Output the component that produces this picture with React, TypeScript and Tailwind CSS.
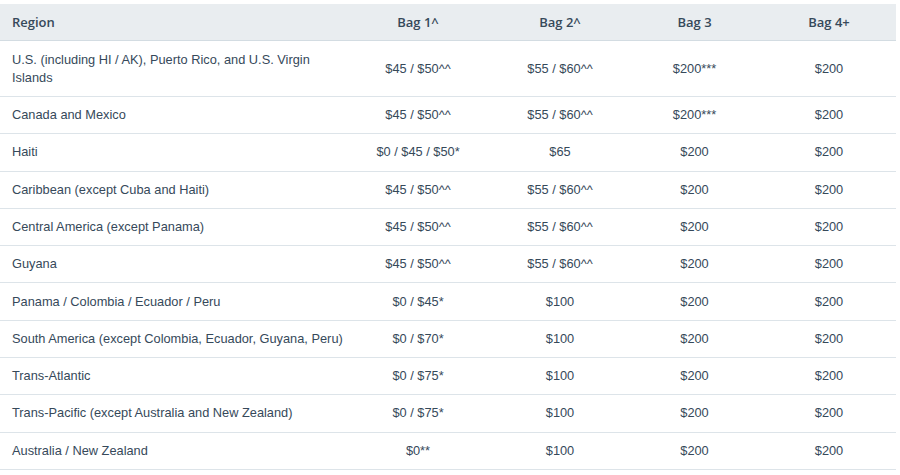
const rows: [string, string, string, string, string][] = [
  ["U.S. (including HI / AK), Puerto Rico, and U.S. Virgin Islands", "$45 / $50^^", "$55 / $60^^", "$200***", "$200"],
  ["Canada and Mexico", "$45 / $50^^", "$55 / $60^^", "$200***", "$200"],
  ["Haiti", "$0 / $45 / $50*", "$65", "$200", "$200"],
  ["Caribbean (except Cuba and Haiti)", "$45 / $50^^", "$55 / $60^^", "$200", "$200"],
  ["Central America (except Panama)", "$45 / $50^^", "$55 / $60^^", "$200", "$200"],
  ["Guyana", "$45 / $50^^", "$55 / $60^^", "$200", "$200"],
  ["Panama / Colombia / Ecuador / Peru", "$0 / $45*", "$100", "$200", "$200"],
  ["South America (except Colombia, Ecuador, Guyana, Peru)", "$0 / $70*", "$100", "$200", "$200"],
  ["Trans-Atlantic", "$0 / $75*", "$100", "$200", "$200"],
  ["Trans-Pacific (except Australia and New Zealand)", "$0 / $75*", "$100", "$200", "$200"],
  ["Australia / New Zealand", "$0**", "$100", "$200", "$200"],
];

const cols = "grid grid-cols-[343px_150px_134px_135px_134px]";

export default function App() {
  return (
    <div className="w-[900px] h-[475px] bg-white pt-1 text-[#36495a] overflow-hidden">
      <div className="w-[896px]">
        <div
          className={`${cols} bg-[#e9edf0] border-b border-[#d3dce2] text-[13px] font-semibold leading-[18px]`}
          style={{ fontFamily: '"Open Sans", sans-serif' }}
        >
          <div className="pl-3 py-[9px]">Region</div>
          <div className="text-center py-[9px]">Bag 1^</div>
          <div className="text-center py-[9px]">Bag 2^</div>
          <div className="text-center py-[9px]">Bag 3</div>
          <div className="text-center py-[9px]">Bag 4+</div>
        </div>
        {rows.map((r, i) => (
          <div
            key={r[0]}
            className={`${cols} items-center border-b border-[#dde4e9] text-[12.8px] leading-[18px]`}
            style={{ fontFamily: '"Liberation Sans", Arial, sans-serif' }}
          >
            <div className={i === 0 ? "pl-3 pr-8 py-[9.5px]" : "pl-3 py-[9.15px] whitespace-nowrap"}>{r[0]}</div>
            <div className="text-center">{r[1]}</div>
            <div className="text-center">{r[2]}</div>
            <div className="text-center">{r[3]}</div>
            <div className="text-center">{r[4]}</div>
          </div>
        ))}
      </div>
    </div>
  );
}
